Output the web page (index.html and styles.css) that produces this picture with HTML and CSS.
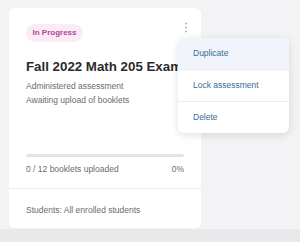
FILE: index.html
```html
<!DOCTYPE html>
<html lang="en">
<head>
    <meta charset="UTF-8">
    <meta name="viewport" content="width=device-width, initial-scale=1.0">
    <title>Assessment Card</title>
    <link rel="stylesheet" href="styles.css">
</head>
<body>
    <div class="page">
        <div class="assessment-card">
            <!-- Card Body -->
            <div class="card-body">
                <div class="card-top">
                    <span class="status-badge">In Progress</span>
                    <button class="kebab" aria-label="More options">
                        <svg width="4" height="11" viewBox="0 0 4 11">
                            <circle cx="2" cy="1.5" r="1" fill="#b2b2b6"/>
                            <circle cx="2" cy="5.5" r="1" fill="#b2b2b6"/>
                            <circle cx="2" cy="9.5" r="1" fill="#b2b2b6"/>
                        </svg>
                    </button>
                </div>
                <h2 class="card-title">Fall 2022 Math 205 Exam</h2>
                <p class="card-meta">Administered assessment</p>
                <p class="card-meta">Awaiting upload of booklets</p>

                <div class="progress">
                    <div class="progress-track"><div class="progress-fill" style="width: 0%"></div></div>
                    <div class="progress-label">
                        <span>0 / 12 booklets uploaded</span>
                        <span>0%</span>
                    </div>
                </div>
            </div>

            <!-- Card Footer -->
            <div class="card-footer">Students: All enrolled students</div>

            <!-- Options Menu -->
            <ul class="options-menu">
                <li class="active">Duplicate</li>
                <li>Lock assessment</li>
                <li>Delete</li>
            </ul>
        </div>
    </div>
</body>
</html>
```

FILE: styles.css
```css
body {
    font-family: "Liberation Sans", Arial, sans-serif;
    background: linear-gradient(#f3f3f5 0, #f3f3f5 229px, #e9e9eb 229px);
    margin: 0;
    padding: 0;
    height: 242px;
    overflow: hidden;
}

.page {
    padding: 8px 9px;
}

.assessment-card {
    position: relative;
    width: 192px;
    height: 220px;
    background-color: #ffffff;
    border-radius: 6px;
    display: flex;
    flex-direction: column;
}

.card-body {
    flex: 1;
    display: flex;
    flex-direction: column;
    padding: 16px 17px 0 17px;
}

.card-top {
    display: flex;
    justify-content: space-between;
    align-items: flex-start;
}

.status-badge {
    display: inline-block;
    background-color: #fbebf6;
    color: #b0479b;
    font-size: 8px;
    font-weight: bold;
    line-height: 18px;
    padding: 0 6.5px;
    border-radius: 9px;
}

.kebab {
    background: none;
    border: none;
    padding: 0;
    margin: -2px -4px 0 0;
    width: 4px;
    height: 11px;
    line-height: 0;
    cursor: pointer;
}

.card-title {
    margin: 16px 0 4px 0;
    font-size: 13.3px;
    line-height: 17px;
    color: #2a2a2c;
    white-space: nowrap;
}

.card-meta {
    margin: 0;
    font-size: 8.5px;
    line-height: 14px;
    color: #6b6b6f;
}

.progress {
    margin-top: auto;
    padding-bottom: 12px;
}

.progress-track {
    height: 3px;
    background-color: #e3e3e6;
    border-radius: 2px;
}

.progress-fill {
    height: 3px;
    background-color: #3d6f96;
}

.progress-label {
    display: flex;
    justify-content: space-between;
    margin-top: 5px;
    font-size: 8.5px;
    line-height: 14px;
    color: #6b6b6f;
}

.card-footer {
    border-top: 1px solid #ececef;
    padding: 14px 17px 0 17px;
    height: 25px;
    font-size: 8.5px;
    line-height: 14px;
    color: #6b6b6f;
}

/* Options Menu */
.options-menu {
    position: absolute;
    top: 30px;
    left: 169px;
    width: 111px;
    margin: 0;
    padding: 0;
    list-style-type: none;
    background-color: #ffffff;
    border-radius: 6px;
    box-shadow: 0 2px 8px rgba(0, 0, 0, 0.12);
    overflow: hidden;
}

.options-menu li {
    height: 31px;
    line-height: 30px;
    padding: 0 15px;
    font-size: 8.5px;
    color: #3b6b92;
    border-bottom: 1px solid #ececef;
    white-space: nowrap;
    cursor: pointer;
}

.options-menu li:last-child {
    border-bottom: none;
}

.options-menu li.active {
    background-color: #f1f5fb;
}
```
